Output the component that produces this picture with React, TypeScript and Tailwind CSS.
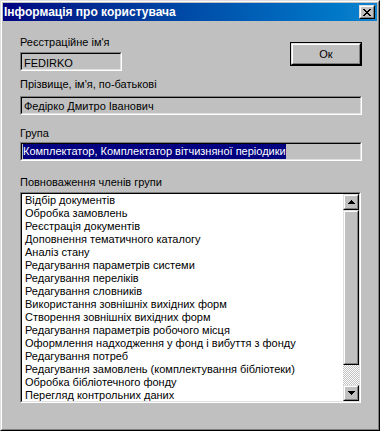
import { ReactNode } from 'react'

const rights = [
  'Відбір документів',
  'Обробка замовлень',
  'Реєстрація документів',
  'Доповнення тематичного каталогу',
  'Аналіз стану',
  'Редагування параметрів системи',
  'Редагування переліків',
  'Редагування словників',
  'Використання зовнішніх вихідних форм',
  'Створення зовнішніх вихідних форм',
  'Редагування параметрів робочого місця',
  'Оформлення надходження у фонд і вибуття з фонду',
  'Редагування потреб',
  'Редагування замовлень (комплектування бібліотеки)',
  'Обробка бібліотечного фонду',
  'Перегляд контрольних даних',
]

// win98 style sunken box (text fields, list)
const Sunken = ( { className = '', children } : { className? : string, children? : ReactNode } ) => (
  <div className={`border border-t-[#808080] border-l-[#808080] border-r-white border-b-white ${className}`}>
    <div className="w-full h-full border border-t-black border-l-black border-r-[#dfdfdf] border-b-[#dfdfdf]">
      {children}
    </div>
  </div>
)

const Raised = ( { className = '', children } : { className? : string, children? : ReactNode } ) => (
  <div className={`border border-t-[#dfdfdf] border-l-[#dfdfdf] border-r-black border-b-black bg-[#c0c0c0] ${className}`}>
    <div className="w-full h-full border border-t-white border-l-white border-r-[#808080] border-b-[#808080] flex items-center justify-center">
      {children}
    </div>
  </div>
)

const Arrow = ( { down = false } : { down? : boolean } ) => (
  <svg width="7" height="4" viewBox="0 0 7 4" className={down ? 'rotate-180' : ''}>
    <path d="M3 0h1v1h1v1h1v1h1v1H0V3h1V2h1V1h1z" fill="#000" />
  </svg>
)

export default function App() {
  return (
    <div className="w-[380px] h-[431px] border border-t-[#dfdfdf] border-l-[#dfdfdf] border-r-black border-b-black font-['Liberation_Sans',Arial,sans-serif] text-[11px] leading-[13px] text-black">
      <div className="w-full h-full border border-t-white border-l-white border-r-[#808080] border-b-[#808080] bg-[#c0c0c0] p-px flex flex-col">

        {/* title bar */}
        <div className="h-[18px] flex items-center justify-between bg-gradient-to-r from-[#000080] to-[#1084d0] pl-[1px] pr-[2px]">
          <span className="text-white font-bold text-[12px] leading-[16px]">Інформація про користувача</span>
          <Raised className="w-[16px] h-[14px]">
            <svg width="8" height="7" viewBox="0 0 8 7">
              <path d="M0 0h2v1h1v1h2V1h1V0h2v1H7v1H6v1H5v1h1v1h1v1h1v1H6V6H5V5H3v1H2v1H0V6h1V5h1V4h1V3H2V2H1V1H0z" fill="#000" />
            </svg>
          </Raised>
        </div>

        <div className="pl-[17px] flex flex-col">
          <div className="flex items-start w-[342px]">
            <div className="flex flex-col flex-1">
              <div className="mt-[15px]">Реєстраційне ім'я</div>
              <Sunken className="mt-[3px] w-[102px] h-[19px]">
                <div className="pl-[2px] pt-[3px]">FEDIRKO</div>
              </Sunken>
            </div>
            <div className="mt-[21px] w-[72px] h-[24px] border border-black">
              <Raised className="w-full h-full">
                <span>Ок</span>
              </Raised>
            </div>
          </div>

          <div className="mt-[7px]">Прізвище, ім'я, по-батькові</div>
          <Sunken className="mt-[5px] w-[342px] h-[19px]">
            <div className="pl-[2px] pt-[2px]">Федірко Дмитро Іванович</div>
          </Sunken>

          <div className="mt-[12px]">Група</div>
          <Sunken className="mt-[2px] w-[342px] h-[19px]">
            <div className="pl-px h-full flex">
              <span className="bg-[#000080] text-white h-full pt-[1px] leading-[13px]">Комплектатор, Комплектатор вітчизняної періодики</span>
            </div>
          </Sunken>

          <div className="mt-[15px]">Повноваження членів групи</div>
          <Sunken className="mt-[3px] w-[341px] h-[211px]">
            <div className="flex h-full bg-white">
              <ul className="flex-1 overflow-hidden">
                {rights.map( ( r ) => (
                  <li key={r} className="h-[13px] pl-[3px] whitespace-nowrap">{r}</li>
                ) )}
              </ul>
              <div className="w-[16px] flex flex-col">
                <Raised className="h-[16px] shrink-0"><Arrow /></Raised>
                <Raised className="h-[155px] shrink-0" />
                <div className="flex-1 bg-[repeating-conic-gradient(#c0c0c0_0%_25%,#ffffff_0%_50%)] bg-[length:2px_2px]" />
                <Raised className="h-[16px] shrink-0"><Arrow down /></Raised>
              </div>
            </div>
          </Sunken>
        </div>
      </div>
    </div>
  )
}
